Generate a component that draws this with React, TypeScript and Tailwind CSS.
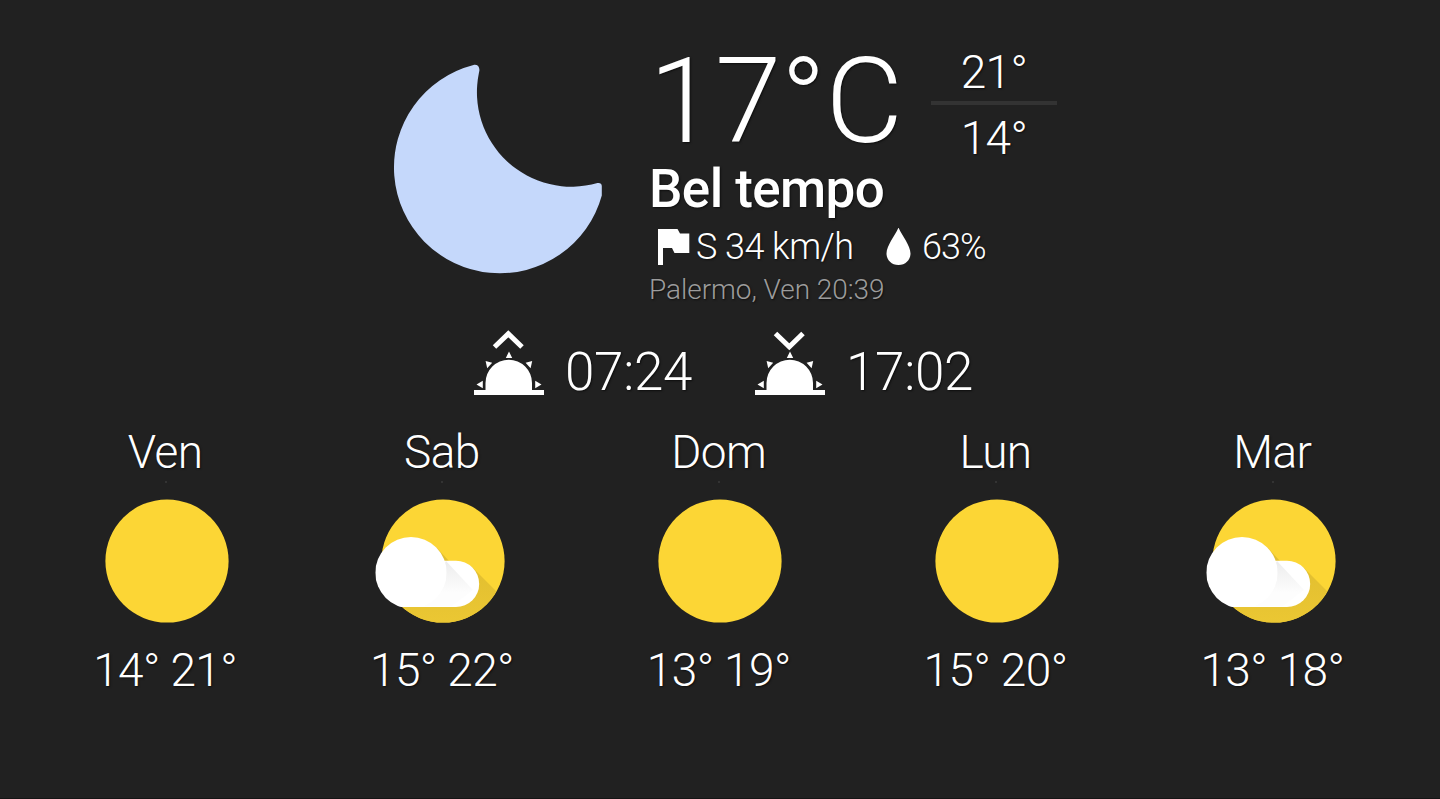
import React from 'react';

type Condition = 'sunny' | 'partly';

interface ForecastDay {
  day: string;
  condition: Condition;
  min: number;
  max: number;
}

const forecast: ForecastDay[] = [
  { day: 'Ven', condition: 'sunny', min: 14, max: 21 },
  { day: 'Sab', condition: 'partly', min: 15, max: 22 },
  { day: 'Dom', condition: 'sunny', min: 13, max: 19 },
  { day: 'Lun', condition: 'sunny', min: 15, max: 20 },
  { day: 'Mar', condition: 'partly', min: 13, max: 18 },
];

function MoonIcon() {
  return (
    <svg width="240" height="240" viewBox="0 0 240 240" className="shrink-0">
      <path
        d="M93.5 15 C97.5 14.2 100 17 99.3 21 L98.9 23 A94.5 94.5 0 0 0 217.5 133 C220 132.6 221.8 133.6 221.8 136 V145.5 A105.8 105.8 0 1 1 93.5 15 Z"
        fill="#c5d8fb"
      />
    </svg>
  );
}

function FlagIcon() {
  return (
    <svg width="34" height="38" viewBox="0 0 34 38" className="shrink-0">
      <path d="M1 1 H20.5 L23 5.5 H32.3 V25 H17.5 L15 20 H6 V37 H1 Z" fill="#fff" />
    </svg>
  );
}

function DropIcon() {
  return (
    <svg width="26" height="39" viewBox="0 0 26 39" className="shrink-0">
      <path d="M12.5 -0.5 C15.5 7 24.5 17.5 24.5 25.5 C24.5 32 19.5 37 12.5 37 C5.5 37 0.5 32 0.5 25.5 C0.5 17.5 9.5 7 12.5 -0.5 Z" fill="#fff" />
    </svg>
  );
}

function SunHorizonIcon({ rising }: { rising: boolean }) {
  return (
    <svg width="72" height="66" viewBox="0 0 72 66" className="shrink-0">
      <path
        d={rising ? 'M21.5 17 L35.3 3.8 L49 17' : 'M21.5 3.5 L35.3 16.8 L49 3.5'}
        fill="none"
        stroke="#fff"
        strokeWidth="5"
      />
      <path d="M12.5 60 V53 A23.2 23.2 0 0 1 59 53 V60 H71 V65 H1 V60 Z" fill="#fff" />
      <path
        d="M36 21.5 L39.2 28 H32.8 Z M12.6 31 L19.2 32.8 L14.2 38.2 Z M59.2 31 L52.6 32.8 L57.6 38.2 Z M3.5 54.5 L9.8 50.8 V58.2 Z M68.5 54.5 L62.2 50.8 V58.2 Z"
        fill="#fff"
      />
    </svg>
  );
}

function ConditionIcon({ condition }: { condition: Condition }) {
  return (
    <svg width="136" height="126" viewBox="0 0 136 126" className="shrink-0">
      <defs>
        <clipPath id="sun-disc">
          <circle cx="69" cy="63" r="61.6" />
        </clipPath>
        <linearGradient id="sun-shade" x1="0" y1="0" x2="0" y2="1">
          <stop offset="0" stopColor="#dfbc2f" />
          <stop offset="1" stopColor="#ebc733" />
        </linearGradient>
        <linearGradient id="cloud-shade" x1="0" y1="0" x2="0" y2="1">
          <stop offset="0" stopColor="#ececec" />
          <stop offset="0.7" stopColor="#fdfdfd" />
        </linearGradient>
      </defs>
      <circle cx="69" cy="63" r="61.6" fill="#fcd635" />
      {condition === 'partly' && (
        <>
          <g clipPath="url(#sun-disc)">
            <path d="M62 49 L75 63 L98 69 L136 107 V126 H20 V105 Z" fill="url(#sun-shade)" />
          </g>
          <path d="M38 62.7 H82 A23.2 23.2 0 0 1 82 109.1 H38 Z" fill="#fff" />
          <path d="M72 63 L99 92 L78 108 H50 Z" fill="url(#cloud-shade)" />
          <path d="M37 39 A35.7 35.7 0 1 1 37 110.4 A35.7 35.7 0 1 1 37 39 Z" fill="#fff" clipPath="inset(0 0 1.3px 0)" />
        </>
      )}
    </svg>
  );
}

function SunTime({ rising, time }: { rising: boolean; time: string }) {
  return (
    <div className="flex w-[281px] items-start">
      <SunHorizonIcon rising={rising} />
      <span className="ml-5 mt-[14px] text-[53px] leading-[56px] tracking-[-0.3px]">{time}</span>
    </div>
  );
}

export default function App() {
  return (
    <main className="h-[799px] w-full overflow-hidden border-b border-[#151515] bg-[#212121] font-[Roboto,sans-serif] font-light text-white [text-shadow:1px_1px_2px_rgba(0,0,0,0.6)]">
      {/* Current conditions */}
      <section className="flex h-[302px] pl-[380px] pt-[41px]">
        <div className="mt-[9px]">
          <MoonIcon />
        </div>
        <div className="ml-[29px]">
          <div className="flex h-[120px]">
            <div className="w-[282px] whitespace-nowrap text-[119.5px] leading-[120px] tracking-[-0.4px]">17°C</div>
            <div className="flex w-[126px] flex-col items-center pt-[2px] text-[46px] leading-[58px] tracking-[-0.6px]">
              <span>21°</span>
              <hr className="h-1 w-full shrink-0 border-0 bg-[#333333]" />
              <span className="mt-1">14°</span>
            </div>
          </div>
          <h1 className="text-[53px] font-medium leading-[56px] tracking-[-0.6px]">Bel tempo</h1>
          <div className="flex h-[60px] items-center pl-[8px] text-[36px] tracking-[-0.55px]">
            <FlagIcon />
            <span className="ml-[5px] w-[190px]">S 34 km/h</span>
            <DropIcon />
            <span className="ml-[10px] tracking-[-1px]">63%</span>
          </div>
          <p className="text-[28px] leading-[25px] tracking-[-0.05px] text-[#9c9c9c]">Palermo, Ven 20:39</p>
        </div>
      </section>

      {/* Sunrise and sunset */}
      <section className="flex h-[123px] pl-[473px] pt-[28px]">
        <SunTime rising time="07:24" />
        <SunTime rising={false} time="17:02" />
      </section>

      {/* Five day forecast */}
      <section className="ml-[27.25px] grid w-[1384px] grid-cols-5">
        {forecast.map(({ day, condition, min, max }) => (
          <div key={day} className="flex flex-col items-center text-[46px] leading-[54px] tracking-[-0.6px]">
            <span className="mr-px">{day}</span>
            <span className="mt-[2px] size-[2px] bg-[#333333]" />
            <div className="mt-[15px]">
              <ConditionIcon condition={condition} />
            </div>
            <span className="mr-px mt-[19px]">
              {min}° {max}°
            </span>
          </div>
        ))}
      </section>
    </main>
  );
}
